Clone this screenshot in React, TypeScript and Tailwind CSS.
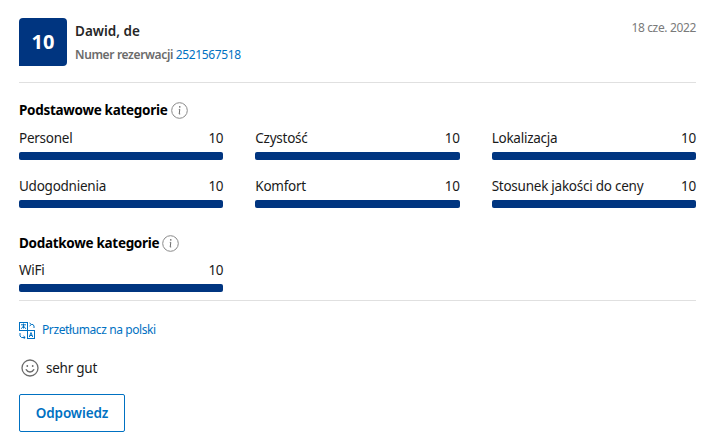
const font = { fontFamily: '"Noto Sans", sans-serif' };

function Info() {
  return (
    <svg width="17" height="17" viewBox="0 0 17 17" fill="none" className="shrink-0">
      <circle cx="8.5" cy="8.5" r="7.8" stroke="#8a8a8a" strokeWidth="1" />
      <circle cx="8.8" cy="4.9" r="0.8" fill="#6b6b6b" />
      <path d="M7.8 7.4h1l-.6 4.6h1" stroke="#6b6b6b" strokeWidth="1" />
    </svg>
  );
}

function Score({ label, value = "10" }: { label: string; value?: string }) {
  return (
    <div className="flex flex-col">
      <div className="flex h-5 items-center justify-between text-[13.5px] tracking-[-0.25px] text-[#1a1a1a]">
        <span>{label}</span>
        <span>{value}</span>
      </div>
      <div className="mt-[4px] h-2 rounded-[2px] bg-[#003580]" />
    </div>
  );
}

function Translate() {
  return (
    <svg width="16" height="17" viewBox="0 0 16 17" fill="none" stroke="#0071c2" strokeWidth="1">
      <rect x="0.5" y="0.5" width="8" height="8" />
      <path d="M2 2.8h5M4.5 1.5v5M2.2 6.8 4.5 4l2.3 2.8" />
      <path d="M10.5 1l2 1.5-2 1.5M12.5 2.5h1.5l1 1.5v2" />
      <path d="M1 11v3l1.5 1.5H6M4.5 14l1.7 1.5L4.5 17" />
      <rect x="8.5" y="8.5" width="7" height="8" />
      <path d="M10.3 15l1.7-4.5 1.7 4.5M10.9 13.5h2.2" />
    </svg>
  );
}

function Smile() {
  return (
    <svg width="18" height="18" viewBox="0 0 18 18" fill="none" stroke="#6b6b6b" strokeWidth="1.3">
      <circle cx="9" cy="9" r="8" />
      <circle cx="6.3" cy="7" r="0.9" fill="#6b6b6b" stroke="none" />
      <circle cx="11.7" cy="7" r="0.9" fill="#6b6b6b" stroke="none" />
      <path d="M5.2 10.6c1 1.8 2.4 2.4 3.8 2.4s2.8-.6 3.8-2.4" strokeLinecap="round" />
    </svg>
  );
}

export default function App() {
  return (
    <div style={font} className="h-[448px] w-[717px] overflow-hidden bg-white px-[19px] pr-[21px] pt-[18px]">
      <div className="flex h-[65px] items-start justify-between border-b border-[#e0e0e0]">
        <div className="flex">
          <div className="flex h-12 w-12 items-center justify-center rounded-[4px] rounded-bl-none bg-[#003580] text-xl font-bold text-white">
            10
          </div>
          <div className="ml-2">
            <div className="mt-[3px] h-5 text-[13.5px] font-semibold leading-5 text-[#262626]">Dawid, de</div>
            <div className="mt-[6px] text-[12px] leading-4 tracking-[-0.36px] text-[#6b6b6b]">
              <span className="font-semibold">Numer rezerwacji</span> <span className="text-[#0071c2]">2521567518</span>
            </div>
          </div>
        </div>
        <div className="mt-[2px] text-[12px] leading-4 tracking-[-0.35px] text-[#7a7a7a]">18 cze. 2022</div>
      </div>

      <div className="mt-[17px] flex h-5 items-center gap-[4px] text-[13.5px] font-bold tracking-[-0.3px] text-black">
        Podstawowe kategorie <Info />
      </div>
      <div className="mt-[8px] grid grid-cols-3 gap-x-8 gap-y-[16px]">
        <Score label="Personel" />
        <Score label="Czystość" />
        <Score label="Lokalizacja" />
        <Score label="Udogodnienia" />
        <Score label="Komfort" />
        <Score label="Stosunek jakości do ceny" />
      </div>

      <div className="mt-[25px] flex h-5 items-center gap-[3px] text-[13.5px] font-bold tracking-[-0.3px] text-black">
        Dodatkowe kategorie <Info />
      </div>
      <div className="mt-[7px] grid grid-cols-3 gap-x-8">
        <Score label="WiFi" />
      </div>

      <div className="mt-[8px] border-t border-[#e0e0e0]" />

      <div className="mt-[20px] flex h-[18px] items-center gap-[7px] text-[12px] tracking-[-0.4px] text-[#0071c2]">
        <Translate />
        <span>Przetłumacz na polski</span>
      </div>

      <div className="mt-[20px] flex h-[18px] items-center gap-[7px] pl-[2px] text-[13.5px] tracking-[-0.25px] text-[#1a1a1a]">
        <Smile />
        <span>sehr gut</span>
      </div>

      <button className="mt-[17px] flex h-[38px] w-[106px] items-center justify-center rounded-[2px] border border-[#0071c2] text-[13.5px] font-semibold tracking-[-0.1px] text-[#0071c2]">
        Odpowiedz
      </button>
    </div>
  );
}
